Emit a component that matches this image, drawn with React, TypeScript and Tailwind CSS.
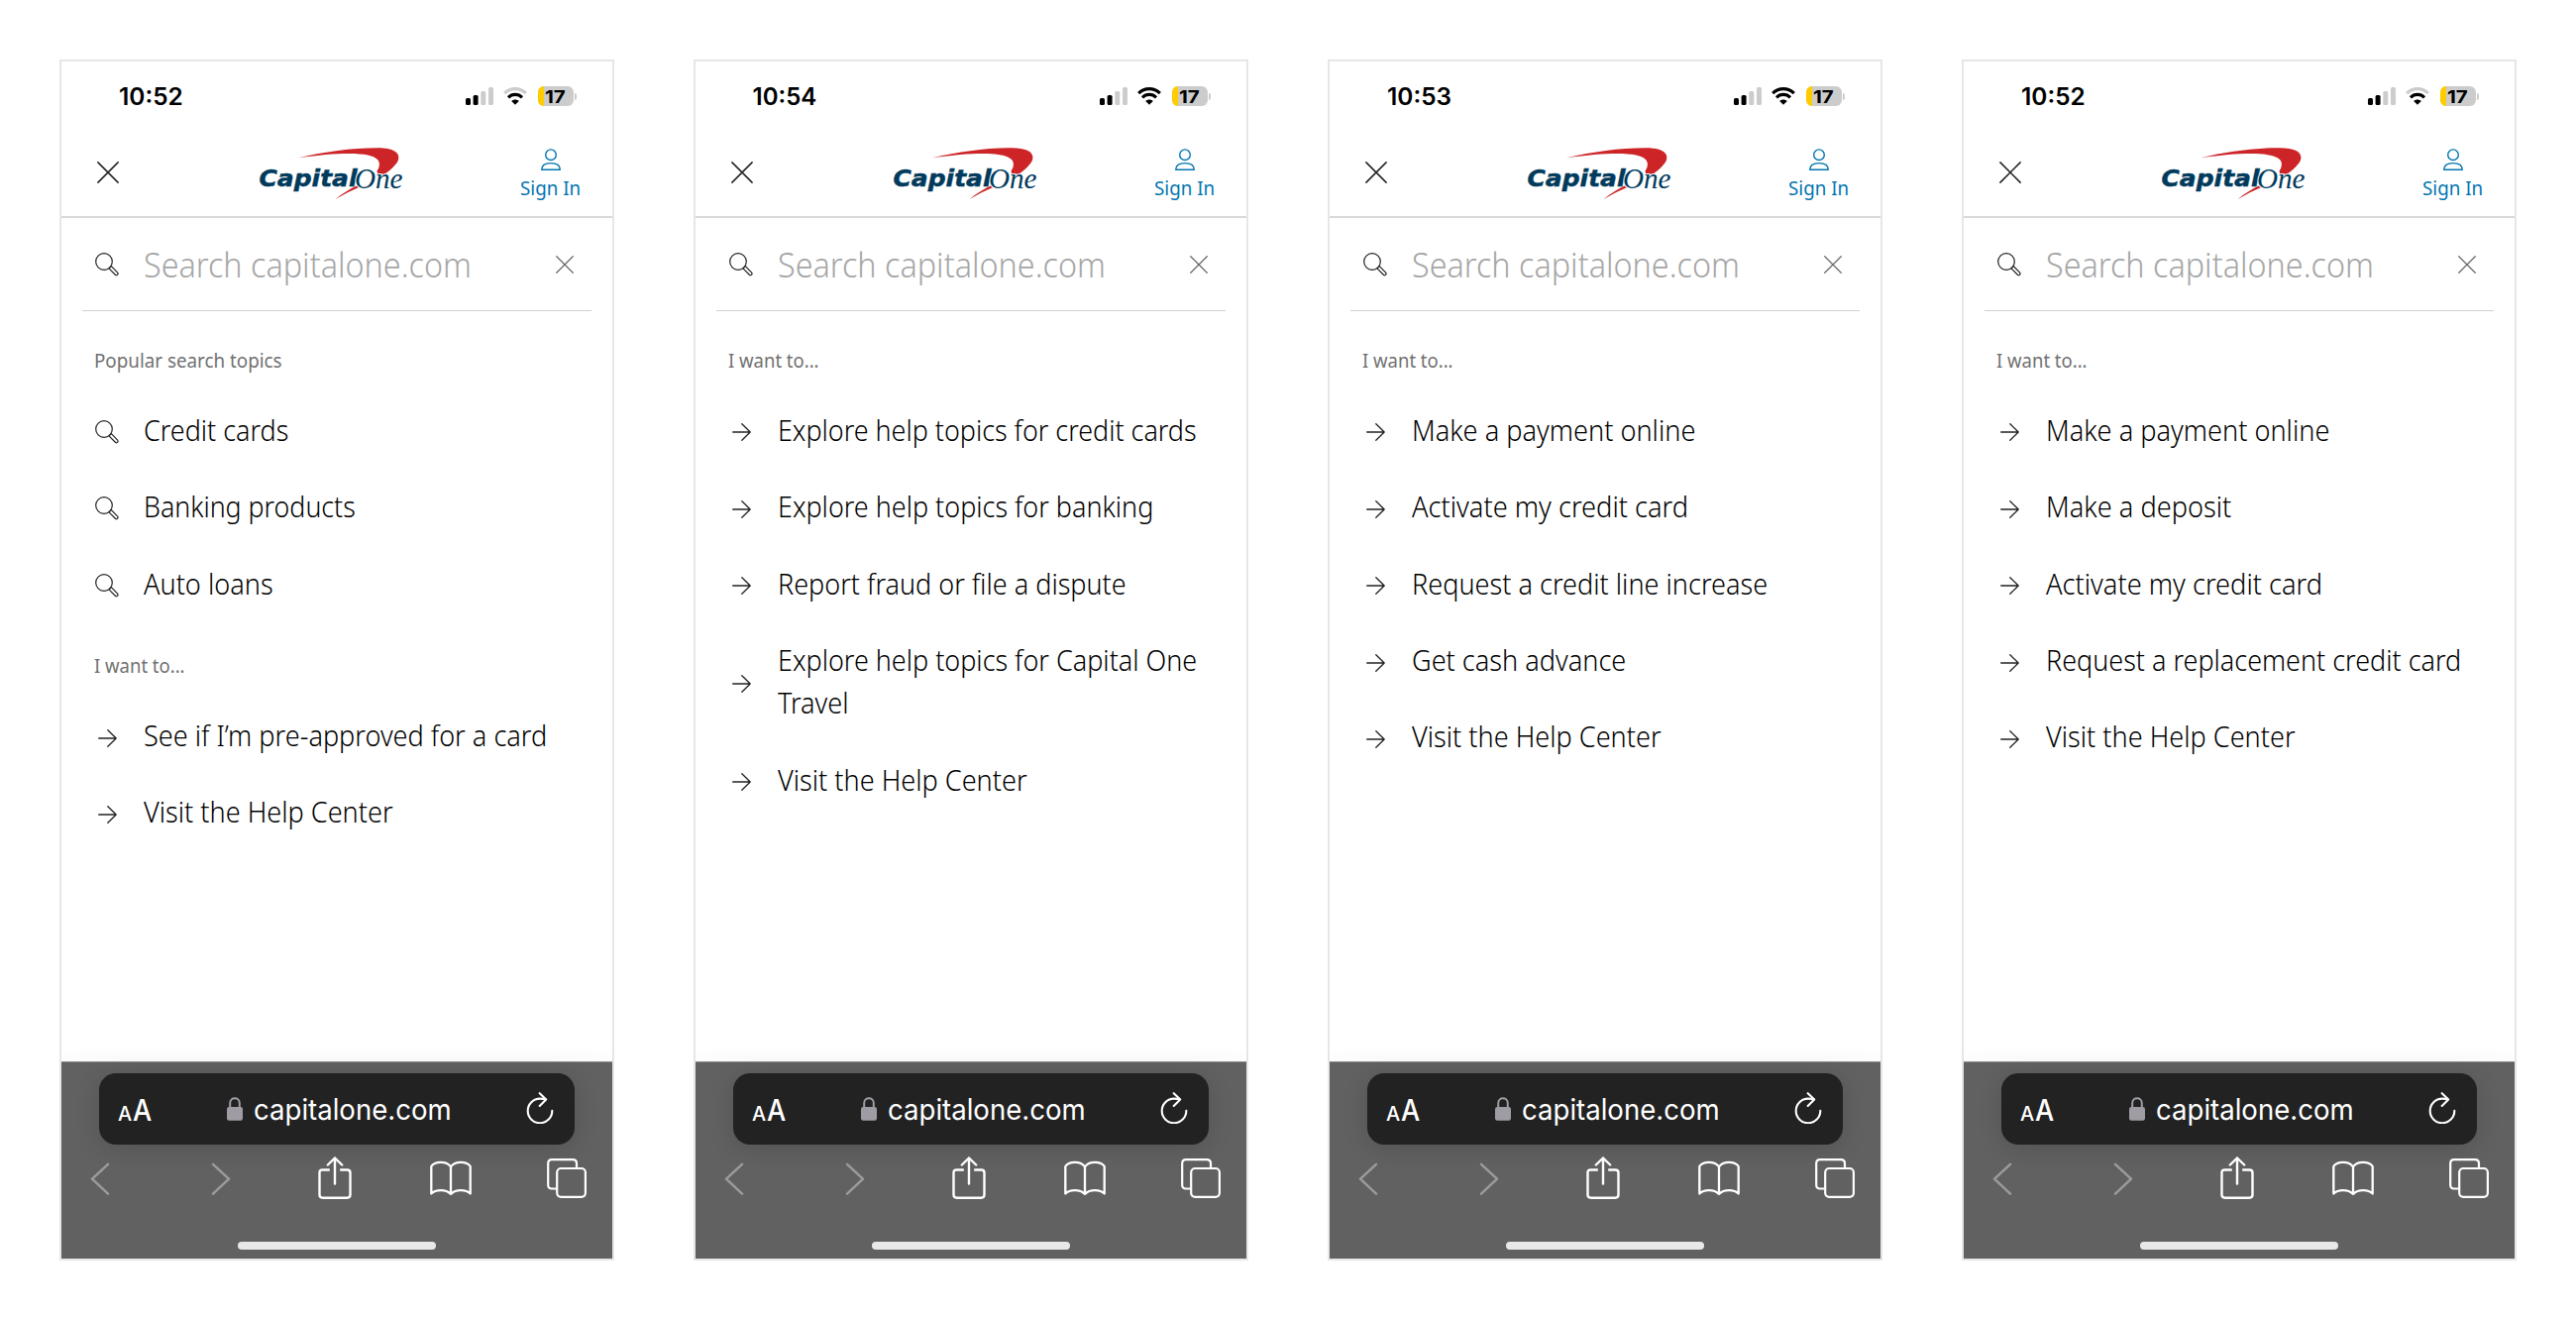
import { useLayoutEffect, useRef, useState } from "react";

/* Condenses a line of text horizontally so that it fills the given width. */
function Fit({ w, children, className = "" }: { w: number; children: string; className?: string }) {
  const ref = useRef<HTMLSpanElement>(null);
  const [scale, setScale] = useState(1);
  useLayoutEffect(() => {
    if (ref.current) setScale(w / ref.current.offsetWidth);
  }, [w]);
  return (
    <span className={"block whitespace-nowrap " + className} style={{ width: w }}>
      <span className="inline-block origin-left" style={{ transform: `scaleX(${scale})` }} ref={ref}>
        {children}
      </span>
    </span>
  );
}

const Signal = () => (
  <svg width="28" height="18" viewBox="0 0 28 18">
    <rect x="0" y="11" width="5" height="7" rx="1.5" fill="#000" />
    <rect x="7.6" y="8" width="5" height="10" rx="1.5" fill="#000" />
    <rect x="15.3" y="4" width="5" height="14" rx="1.5" fill="#ccc" />
    <rect x="23" y="0" width="5" height="18" rx="1.5" fill="#ccc" />
  </svg>
);

const Wifi = ({ full }: { full: boolean }) => (
  <svg width="24" height="18" viewBox="0 0 24 18" fill="none" strokeWidth="3.1">
    <path d="M1.2 6.2C7.4 .1 16.6 .1 22.8 6.2" stroke={full ? "#000" : "#ccc"} />
    <path d="M5 10.3C9 6.4 15 6.4 19 10.3" stroke="#000" />
    <path d="M12 17.7L8.2 13.9C10.4 11.9 13.6 11.9 15.8 13.9Z" fill="#000" />
  </svg>
);

const Battery = () => (
  <div className="flex items-center gap-px">
    <div className="flex h-5 w-9 items-center overflow-hidden rounded-[6px] bg-[#ccc]">
      <div className="h-5 w-1.5 bg-[#ffcc00]" />
      <Fit w={20.5} className="pt-px pl-px font-['Inter'] text-[18px] leading-5 font-bold text-black">17</Fit>
    </div>
    <div className="h-[7px] w-[2px] rounded-r-full bg-[#ccc]" />
  </div>
);

const Cross = ({ size, color }: { size: number; color: string }) => (
  <svg width={size} height={size} viewBox="0 0 22 22" fill="none" stroke={color} strokeWidth="1.5" strokeLinecap="round">
    <path d="M.9 .9L21.1 21.1M21.1 .9L.9 21.1" />
  </svg>
);

const Search = () => (
  <svg width="24" height="24" viewBox="0 0 24 24" fill="none" stroke="#222" strokeWidth="1.2" strokeLinejoin="round">
    <circle cx="9" cy="9" r="8.3" />
    <path d="M14.9 14.9L16.4 13.7L22.7 20.2C23.7 21.5 22.2 23.5 20.6 22.5L14 15.9L14.9 14.9" />
  </svg>
);

const Arrow = () => (
  <svg width="19" height="18" viewBox="0 0 19 18" fill="none" stroke="#222" strokeWidth="1.3" strokeLinecap="round" strokeLinejoin="round">
    <path d="M.7 9H18.2M9.8 .7L18.2 9L9.8 17.3" />
  </svg>
);

const Logo = () => (
  <svg width="146" height="54" viewBox="0 0 146 54" className="overflow-visible">
    <path
      d="M39.3 10.2C66 4 92 .3 119 .2C134 .1 142.500 4.500 140 12.500C137.500 19 128 25.500 120.500 31.200L118.500 23.500C121.500 19.500 121.500 15.500 119.500 12.600C113 4 82 4.500 39.300 10.200Z"
      fill="#cc2427"
    />
    <path d="M99 37.800L100.500 39.900C92 43.300 84.500 47.300 76.600 52C83.300 46.600 90.500 42 99 37.800Z" fill="#cc2427" />
    <text x="-.5" y="39.200" fontFamily="DejaVu Sans" fontWeight="700" fontStyle="italic" fontSize="23.500" textLength="99" lengthAdjust="spacingAndGlyphs" fill="#003a5c" stroke="#003a5c" strokeWidth="0.500">
      Capital
    </text>
    <text x="96" y="41" fontFamily="Liberation Serif" fontStyle="italic" fontSize="30" textLength="48.500" lengthAdjust="spacingAndGlyphs" fill="#003a5c" stroke="#fff" strokeWidth="2" paintOrder="stroke">
      One
    </text>
  </svg>
);

const Person = () => (
  <svg width="20" height="22" viewBox="0 0 20 22" fill="none" stroke="#0276b1" strokeWidth="1.4">
    <circle cx="10" cy="6.200" r="5.300" />
    <path d="M.7 21.300C.7 16.500 4.500 14.600 10 14.600S19.300 16.500 19.300 21.300Z" strokeLinejoin="round" />
  </svg>
);

const Lock = () => (
  <svg width="16" height="24" viewBox="0 0 16 24">
    <path d="M3.200 11V6.200C3.200 -.3 12.800 -.3 12.800 6.200V11" fill="none" stroke="#9f9ca4" strokeWidth="2" />
    <rect x="0" y="10" width="16" height="13.700" rx="2.200" fill="#9f9ca4" />
  </svg>
);

const Reload = () => (
  <svg width="28" height="32" viewBox="0 0 28 32" fill="none" stroke="#fff" strokeWidth="2.100" strokeLinecap="round" strokeLinejoin="round">
    <path d="M26.300 18.800A12.300 12.300 0 1 1 14 6.600C16 6.600 18 6.900 19.600 7.400" />
    <path d="M13.700 1.200L20.200 7.400L13.700 14" />
  </svg>
);

const Chevron = ({ flip = false }: { flip?: boolean }) => (
  <svg width="20" height="34" viewBox="0 0 20 34" fill="none" stroke="#9b9b9b" strokeWidth="2.500" strokeLinecap="round" strokeLinejoin="round" className={flip ? "-scale-x-100" : ""}>
    <path d="M18 2.800L2 17.700L18 32.600" />
  </svg>
);

const Share = () => (
  <svg width="34" height="44" viewBox="0 0 34 44" fill="none" stroke="#fff" strokeWidth="2.400" strokeLinecap="round" strokeLinejoin="round">
    <path d="M11.800 13.500H4.500Q1.500 13.500 1.500 16.500V38.500Q1.500 41.700 4.700 41.700H29.300Q32.500 41.700 32.500 38.500V16.500Q32.500 13.500 29.500 13.500H22.200" strokeLinecap="butt" />
    <path d="M17 27.500V1.500M9.800 8.500L17 1.500L24.200 8.500" />
  </svg>
);

const Book = () => (
  <svg width="42" height="36" viewBox="0 0 42 36" fill="none" stroke="#fff" strokeWidth="2.300" strokeLinejoin="round">
    <path d="M21 6.500C17 .2 4.500 .6 1.300 6V33.500C5.500 29.400 15.500 28.500 21 33.900C26.500 28.500 36.500 29.400 40.700 33.500V6C37.500 .6 25 .2 21 6.500ZM21 6.500V33.900" />
  </svg>
);

const Tabs = () => (
  <svg width="40" height="40" viewBox="0 0 40 40" fill="none" stroke="#fff" strokeWidth="2.200">
    <rect x="10.200" y="10" width="28.700" height="28.800" rx="4" />
    <path d="M10.200 30.500H5Q1.200 30.500 1.200 26.700V5Q1.200 1.200 5 1.200H26Q30 1.200 30 5V10" />
  </svg>
);

type Line = [string, number];
type Group = { title: string; titleW: number; search?: boolean; rows: Line[][] };
type Phone = { time: string; wifi: boolean; groups: Group[] };

const want = { title: "I want to...", titleW: 91.5 };
const visit: Line[] = [["Visit the Help Center", 251.5]];
const activate: Line[] = [["Activate my credit card", 279.5]];
const payment: Line[] = [["Make a payment online", 286]];

const phones: Phone[] = [
  {
    time: "10:52",
    wifi: false,
    groups: [
      {
        title: "Popular search topics",
        titleW: 190,
        search: true,
        rows: [[["Credit cards", 146]], [["Banking products", 214]], [["Auto loans", 130.5]]],
      },
      { ...want, rows: [[["See if I’m pre-approved for a card", 407.5]], visit] },
    ],
  },
  {
    time: "10:54",
    wifi: true,
    groups: [
      {
        ...want,
        rows: [
          [["Explore help topics for credit cards", 423]],
          [["Explore help topics for banking", 379]],
          [["Report fraud or file a dispute", 351.5]],
          [["Explore help topics for Capital One", 423], ["Travel", 71.5]],
          visit,
        ],
      },
    ],
  },
  {
    time: "10:53",
    wifi: true,
    groups: [
      {
        ...want,
        rows: [payment, activate, [["Request a credit line increase", 359]], [["Get cash advance", 216]], visit],
      },
    ],
  },
  {
    time: "10:52",
    wifi: false,
    groups: [
      {
        ...want,
        rows: [payment, [["Make a deposit", 187]], activate, [["Request a replacement credit card", 419.5]], visit],
      },
    ],
  },
];

function Topics({ group, first }: { group: Group; first: boolean }) {
  return (
    <section>
      <h2 className={"pb-[18px] pl-[33px] text-[19.2px] leading-7 font-normal text-[#717171] " + (first ? "pt-[36px]" : "pt-[30px]")}>
        <Fit w={group.titleW}>{group.title}</Fit>
      </h2>
      {group.rows.map((lines) => (
        <div key={lines[0][0]} className="flex items-center pt-[15.8px] pb-[18.4px] pl-[34px]">
          <div className={"flex w-[49px] " + (group.search ? "pt-[5px]" : "pt-[6px] pl-[3px]")}>
            {group.search ? <Search /> : <Arrow />}
          </div>
          <div className="text-[29.5px] leading-[43.2px] font-light text-black">
            {lines.map(([text, w]) => (
              <Fit key={text} w={w}>{text}</Fit>
            ))}
          </div>
        </div>
      ))}
    </section>
  );
}

function PhoneScreen({ phone }: { phone: Phone }) {
  return (
    <div className="flex h-[1212px] w-[560px] flex-col overflow-hidden border-2 border-[#e6e6e6] bg-white">
      <div className="flex h-[70px] items-center justify-between pr-[36px] pl-[57.5px]">
        <Fit w={65} className="font-['Inter'] text-[24px] leading-[70px] font-semibold text-black pt-px">{phone.time}</Fit>
        <div className="flex items-center">
          <Signal />
          <div className="flex pr-[11px] pl-[10px]"><Wifi full={phone.wifi} /></div>
          <Battery />
        </div>
      </div>
      <div className="flex h-[88px] items-start border-b-2 border-[#d9d9d9] pr-[32px] pl-9">
        <div className="flex w-[164px] pt-[31px]"><Cross size={22} color="#222" /></div>
        <div className="flex flex-1 pt-[17px]"><Logo /></div>
        <div className="flex flex-col items-center pt-[18px] text-[20px] leading-6 text-[#0276b1]">
          <Person />
          <Fit w={61} className="mt-[6px]">Sign In</Fit>
        </div>
      </div>
      <div className="mx-[21px] flex h-[94px] items-center border-b-[1.5px] border-[#d2d2d2] pr-[18px] pl-[13px]">
        <div className="flex w-[49px] pt-px"><Search /></div>
        <div className="flex-1 text-[34px] leading-[44px] font-light text-[#a6a6a6]"><Fit w={331}>Search capitalone.com</Fit></div>
        <Cross size={18} color="#666" />
      </div>
      <div className="flex-1">
        {phone.groups.map((g, i) => (
          <Topics key={g.title} group={g} first={i === 0} />
        ))}
      </div>
      <div className="h-[199px] border-t border-[#8c8c8c] bg-[#616161] pt-[11px] shadow-[0_0_20px_rgba(0,0,0,0.04)]">
        <div className="mx-[38px] flex h-[72px] items-center rounded-[17px] bg-[#222] pr-[21px] pl-[19px] font-['Inter'] text-white shadow-[0_4px_24px_rgba(0,0,0,0.14)]">
          <div className="flex items-baseline gap-px pt-[6px] leading-9 font-medium">
            <Fit w={14} className="text-[20px]">A</Fit>
            <Fit w={19} className="text-[30px]">A</Fit>
          </div>
          <div className="flex flex-1 items-center pl-[76px]">
            <Lock />
            <Fit w={200} className="ml-[11px] pb-px text-[29.5px] leading-10">capitalone.com</Fit>
          </div>
          <div className="flex pb-[2px]"><Reload /></div>
        </div>
        <div className="flex h-[68px] items-center pl-[29px]">
          <Chevron />
          <div className="ml-[102px]"><Chevron flip /></div>
          <div className="ml-[88px]"><Share /></div>
          <div className="ml-[79px]"><Book /></div>
          <div className="ml-[76px]"><Tabs /></div>
        </div>
        <div className="mx-auto mt-[30px] h-2 w-[200px] rounded-full bg-[#e8e8e8]" />
      </div>
    </div>
  );
}

export default function App() {
  return (
    <main className="flex h-[1332px] w-[2600px] gap-20 bg-white p-[60px] font-['Noto_Sans',sans-serif]">
      {phones.map((p, i) => (
        <PhoneScreen key={i} phone={p} />
      ))}
    </main>
  );
}
